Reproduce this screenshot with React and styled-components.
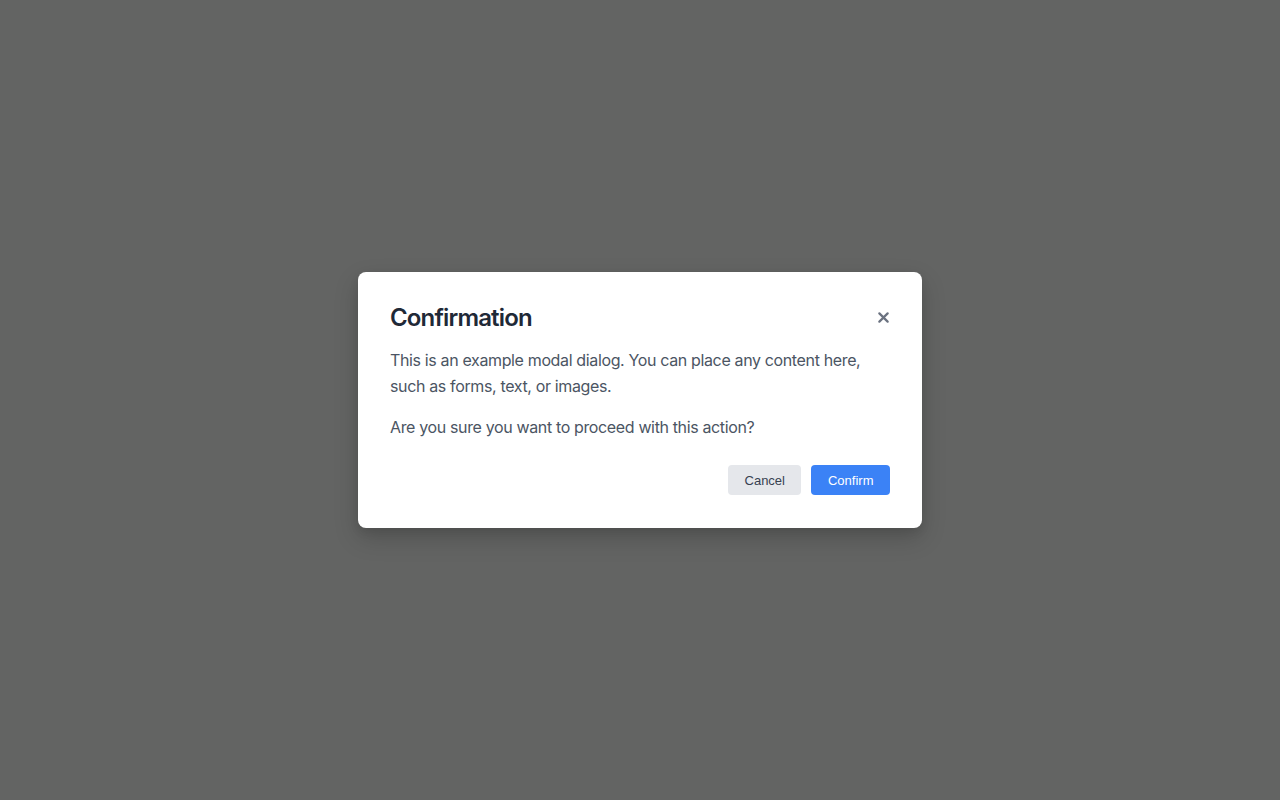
import React from "react";
import styled, {createGlobalStyle} from "styled-components";

const GlobalStyle = createGlobalStyle`
  html, body {
    margin: 0;
    padding: 0;
    height: 100%;
  }
  #root {
    height: 100%;
  }
`

const Overlay = styled.div`
  width: 100vw;
  height: 100vh;
  background: #636463;
  display: flex;
  align-items: center;
  justify-content: center;
  font-family: Inter, "Liberation Sans", sans-serif;
`

const Dialog = styled.div`
  width: 564px;
  box-sizing: border-box;
  padding: 32px 32px 33px;
  background: #ffffff;
  border-radius: 8px;
  box-shadow: 0 10px 25px rgba(0, 0, 0, 0.18), 0 4px 10px rgba(0, 0, 0, 0.08);
`

const Header = styled.div`
  display: flex;
  align-items: center;
  justify-content: space-between;
  height: 28px;
  margin-bottom: 15px;
`

const Title = styled.h2`
  margin: 0;
  font-size: 24px;
  font-weight: 600;
  line-height: 28px;
  color: #1f2937;
  letter-spacing: -0.85px;
`

const CloseButton = styled.button`
  border: none;
  background: none;
  padding: 0;
  width: 14px;
  height: 14px;
  display: flex;
  align-items: center;
  justify-content: center;
  color: #6b7280;
  cursor: pointer;
  margin-top: -2px;
`

const Text = styled.p`
  margin: 0 0 ${({gap}) => gap || 0}px;
  font-size: 16px;
  line-height: 26px;
  letter-spacing: -0.36px;
  color: #4b5563;
`

const Footer = styled.div`
  display: flex;
  justify-content: flex-end;
  gap: 10px;
  margin-top: 25px;
`

const Button = styled.button`
  height: 30px;
  padding: 0 16.5px;
  border: none;
  border-radius: 4px;
  font-family: "Liberation Sans", Arial, sans-serif;
  font-size: 13px;
  background: ${({primary}) => primary ? "#3b82f6" : "#e5e7eb"};
  color: ${({primary}) => primary ? "#ffffff" : "#374151"};
  cursor: pointer;
`

const CloseIcon = () => (
    <svg width="11" height="11" viewBox="0 0 12 12" fill="none">
        <path d="M1.5 1.5L10.5 10.5M10.5 1.5L1.5 10.5" stroke="currentColor" strokeWidth="2.4" strokeLinecap="round"/>
    </svg>
)

const App = () => {
    return (
        <>
            <GlobalStyle/>
            <Overlay>
                <Dialog>
                    <Header>
                        <Title>Confirmation</Title>
                        <CloseButton aria-label="Close"><CloseIcon/></CloseButton>
                    </Header>
                    <Text gap={15}>
                        This is an example modal dialog. You can place any content here, such as forms, text, or images.
                    </Text>
                    <Text>Are you sure you want to proceed with this action?</Text>
                    <Footer>
                        <Button>Cancel</Button>
                        <Button primary>Confirm</Button>
                    </Footer>
                </Dialog>
            </Overlay>
        </>
    )
}

export default App;
